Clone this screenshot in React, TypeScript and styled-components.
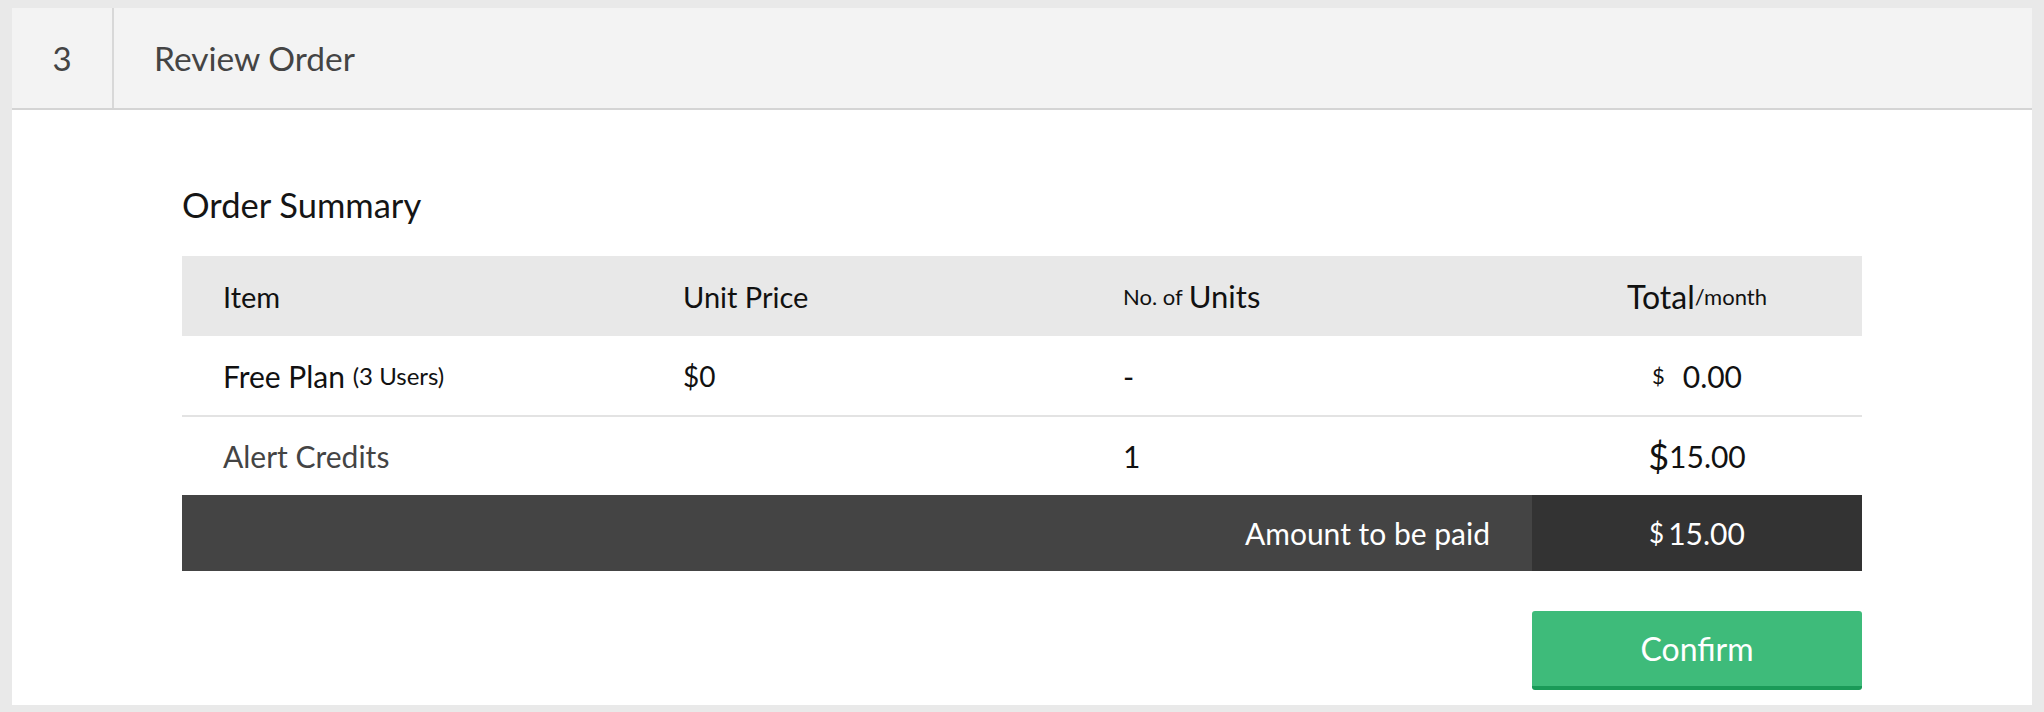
import React from "react";
import styled, { createGlobalStyle } from "styled-components";

const GlobalStyle = createGlobalStyle`
  html, body { margin: 0; padding: 0; }
  body {
    background: #e9e9e9;
    font-family: Lato, "Noto Sans", "Liberation Sans", sans-serif;
    color: #111;
  }
  * { box-sizing: border-box; }
`;

const Page = styled.div`
  padding: 8px 12px 6px;
`;

const Card = styled.section`
  background: #fff;
`;

const StepHeader = styled.header`
  display: flex;
  height: 102px;
  background: #f3f3f3;
  border-bottom: 2px solid #d4d4d4;
`;

const StepNumber = styled.div`
  width: 102px;
  border-right: 2px solid #d8d8d8;
  display: flex;
  align-items: center;
  justify-content: center;
  font-size: 33px;
  color: #444;
`;

const StepTitle = styled.h2`
  margin: 0;
  padding-left: 40px;
  display: flex;
  align-items: center;
  font-size: 33.5px;
  font-weight: 400;
  color: #444;
`;

const Body = styled.div`
  padding: 75px 170px 15px;
`;

const SectionTitle = styled.h3`
  margin: 0 0 31px;
  font-size: 34.5px;
  line-height: 40px;
  font-weight: 400;
  color: #151515;
`;

const COLS = "460px 440px 450px 330px";

const HeadRow = styled.div`
  display: grid;
  grid-template-columns: ${COLS};
  height: 80px;
  background: #e8e8e8;
`;

const Row = styled.div<{ $divider?: boolean; $h: number }>`
  display: grid;
  grid-template-columns: ${COLS};
  height: ${(p) => p.$h}px;
  border-bottom: ${(p) => (p.$divider ? "2px solid #e3e3e3" : "none")};
`;

const Cell = styled.div<{ $center?: boolean; $muted?: boolean; $size?: number }>`
  display: flex;
  align-items: center;
  justify-content: ${(p) => (p.$center ? "center" : "flex-start")};
  padding-left: ${(p) => (p.$center ? 0 : 41)}px;
  font-size: ${(p) => p.$size ?? 30}px;
  color: ${(p) => (p.$muted ? "#444" : "#111")};
  white-space: nowrap;
`;

const Small = styled.span<{ $size: number; $gap?: number }>`
  font-size: ${(p) => p.$size}px;
  margin-right: ${(p) => p.$gap ?? 0}px;
`;

const Big = styled.span<{ $size: number }>`
  font-size: ${(p) => p.$size}px;
`;

const TotalBar = styled.div`
  display: grid;
  grid-template-columns: 1350px 330px;
  height: 76px;
`;

const TotalLabel = styled.div`
  background: #444;
  color: #fff;
  display: flex;
  align-items: center;
  justify-content: flex-end;
  padding-right: 42px;
  font-size: 30px;
`;

const TotalValue = styled.div`
  background: #333;
  color: #fff;
  display: flex;
  align-items: center;
  justify-content: center;
  font-size: 30px;
`;

const Actions = styled.div`
  display: flex;
  justify-content: flex-end;
  margin-top: 40px;
`;

const ConfirmButton = styled.button`
  width: 330px;
  height: 79px;
  background: #3ebb7a;
  border: none;
  border-bottom: 4px solid #1a9a58;
  border-radius: 3px;
  color: #fff;
  font-family: inherit;
  font-size: 32px;
  cursor: pointer;
  padding: 0;
`;

export default function App() {
  return (
    <>
      <GlobalStyle />
      <Page>
        <Card>
          <StepHeader>
            <StepNumber>3</StepNumber>
            <StepTitle>Review Order</StepTitle>
          </StepHeader>
          <Body>
            <SectionTitle>Order Summary</SectionTitle>
            <HeadRow>
              <Cell $size={29}>Item</Cell>
              <Cell $size={29}>Unit Price</Cell>
              <Cell $size={31}>
                <Small $size={22} $gap={6}>No. of</Small>Units
              </Cell>
              <Cell $center $size={32}>
                Total<Small $size={22}>/month</Small>
              </Cell>
            </HeadRow>
            <Row $h={81} $divider>
              <Cell $size={30}>
                Free Plan&nbsp;<Small $size={24}>(3 Users)</Small>
              </Cell>
              <Cell $size={28}>$0</Cell>
              <Cell $size={30}>-</Cell>
              <Cell $center $size={30}>
                <Small $size={22} $gap={18}>$</Small>0.00
              </Cell>
            </Row>
            <Row $h={78}>
              <Cell $size={30} $muted>Alert Credits</Cell>
              <Cell />
              <Cell $size={30}>1</Cell>
              <Cell $center $size={30}>
                <Big $size={36}>$</Big>15.00
              </Cell>
            </Row>
            <TotalBar>
              <TotalLabel>Amount to be paid</TotalLabel>
              <TotalValue>
                <Small $size={26} $gap={4}>$</Small>15.00
              </TotalValue>
            </TotalBar>
            <Actions>
              <ConfirmButton>Confirm</ConfirmButton>
            </Actions>
          </Body>
        </Card>
      </Page>
    </>
  );
}
